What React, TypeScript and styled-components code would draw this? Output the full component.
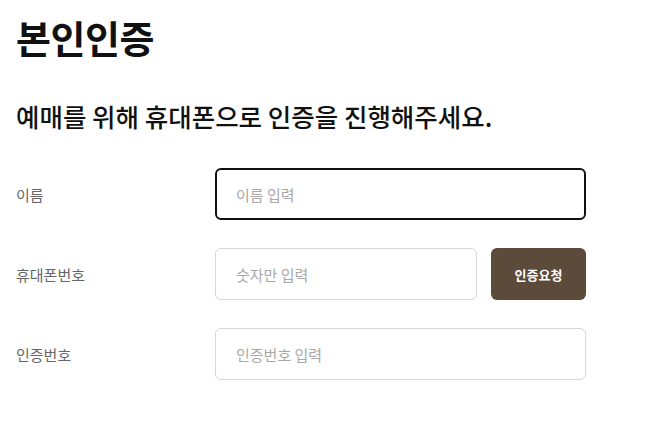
import React from 'react';
import styled, {createGlobalStyle} from 'styled-components';

const FONT = `"Noto Sans CJK KR", "Noto Sans", sans-serif`;

const GlobalStyle = createGlobalStyle`
  body {
    margin: 0;
    background: #fff;
    font-family: ${FONT};
  }
`;

const fields = [
    {label: '이름', placeholder: '이름 입력', focused: true},
    {label: '휴대폰번호', placeholder: '숫자만 입력', button: '인증요청'},
    {label: '인증번호', placeholder: '인증번호 입력'},
];

export default function App() {
    return (
        <Wrapper>
            <GlobalStyle/>
            <Title>본인인증</Title>
            <Subtitle>예매를 위해 휴대폰으로 인증을 진행해주세요.</Subtitle>

            <Form>
                {fields.map((item, key) => (
                    <FieldRow key={key}>
                        <Label>{item.label}</Label>
                        <Controls>
                            <Input
                                placeholder={item.placeholder}
                                focused={item.focused}
                                autoFocus={item.focused}
                            />
                            {item.button && <RequestButton type="button">{item.button}</RequestButton>}
                        </Controls>
                    </FieldRow>
                ))}
            </Form>
        </Wrapper>
    );
}


const Wrapper = styled.div`
    padding: 11px 16px;
    width: 570px;
`;

const Title = styled.h1`
    margin: 0;
    font-size: 38px;
    line-height: 52px;
    font-weight: 700;
    color: #111;
    letter-spacing: -0.5px;
`;

const Subtitle = styled.h2`
    margin: 35px 0 0;
    font-size: 25.5px;
    line-height: 36px;
    font-weight: 500;
    color: #111;
    letter-spacing: 0;
`;

const Form = styled.div`
    margin-top: 34px;
    display: flex;
    flex-direction: column;
    gap: 28px;
`;

const FieldRow = styled.div`
    display: grid;
    grid-template-columns: 199px 371px;
    align-items: center;
`;

const Label = styled.div`
    font-size: 15px;
    color: #666;
`;

const Controls = styled.div`
    display: flex;
    gap: 14px;
`;

const Input = styled.input<{focused?: boolean}>`
    flex: 1;
    min-width: 0;
    height: 52px;
    box-sizing: border-box;
    padding: 0 ${p => p.focused ? '19px' : '20px'};
    border: ${p => p.focused ? '2px solid #111' : '1px solid #d6d6d6'};
    border-radius: 6px;
    font-family: ${FONT};
    font-size: 15px;
    color: #222;
    outline: none;
    caret-color: #111;

    &::placeholder {
        color: #a8a8a8;
    }
`;

const RequestButton = styled.button`
    width: 95px;
    height: 52px;
    border: none;
    border-radius: 6px;
    background: #5c4a3b;
    color: #fff;
    font-family: ${FONT};
    font-size: 13px;
    font-weight: 700;
    cursor: pointer;
`;
